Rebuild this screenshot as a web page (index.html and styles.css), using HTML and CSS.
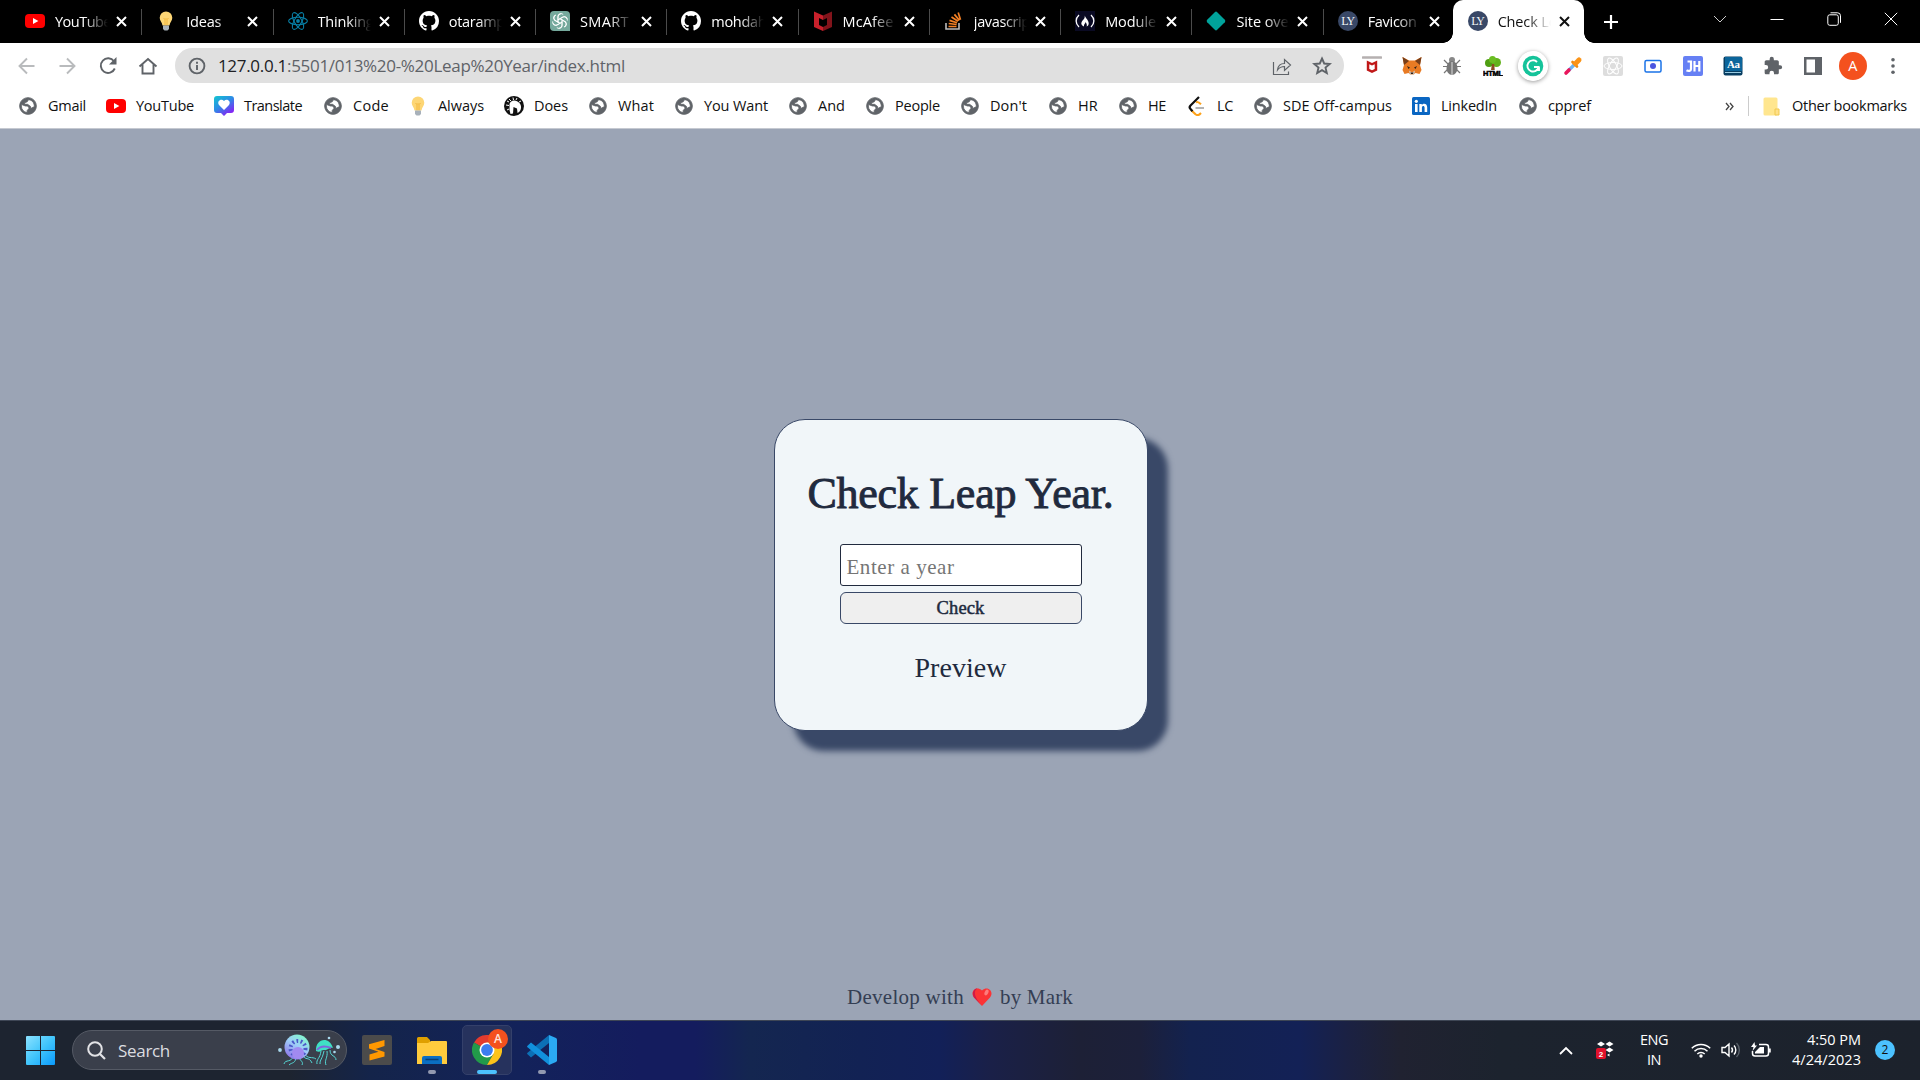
FILE: index.html
```html
<!DOCTYPE html>
<html lang="en">
<head>
<meta charset="utf-8">
<title>Check Leap Year</title>
<link rel="stylesheet" href="styles.css">
</head>
<body>
<svg class="defs" aria-hidden="true">
  <symbol id="youtube" viewBox="0 0 20 20"><rect y="3" width="20" height="14" rx="4" fill="#f00"/><path d="M8 7l5.4 3L8 13z" fill="#fff"/></symbol>
  <symbol id="bulb" viewBox="0 0 20 20"><path d="M10 .5a6.3 6.3 0 0 0-6.3 6.3c0 3 2.3 4.200 2.800 7.700h7c.5-3.500 2.800-4.700 2.800-7.700A6.300 6.300 0 0 0 10 .5z" fill="#fdd675"/><path d="M7.500 7l1.500 1.500 1-1 1 1L12.500 7M9 8.500v6M11 8.500v6" stroke="#f2b63c" fill="none"/><path d="M7 14.500h6v3.500l-1.500 1.500h-3L7 18z" fill="#a8b1ba"/></symbol>
  <symbol id="react" viewBox="0 0 20 20"><g fill="none" stroke="#087ea4" stroke-width="1.100"><ellipse cx="10" cy="10" rx="9.400" ry="3.700"/><ellipse cx="10" cy="10" rx="9.400" ry="3.700" transform="rotate(60 10 10)"/><ellipse cx="10" cy="10" rx="9.400" ry="3.700" transform="rotate(120 10 10)"/></g><circle cx="10" cy="10" r="1.900" fill="#087ea4"/></symbol>
  <symbol id="github" viewBox="0 0 16 16"><path fill="#fff" d="M8 0C3.58 0 0 3.58 0 8c0 3.54 2.29 6.530 5.470 7.590.4.070.550-.170.550-.380 0-.190-.010-.820-.010-1.490-2.010.370-2.530-.490-2.690-.940-.090-.230-.480-.940-.820-1.130-.280-.150-.680-.520-.010-.530.630-.010 1.080.580 1.230.820.720 1.210 1.870.870 2.330.660.070-.520.280-.870.510-1.070-1.780-.200-3.640-.890-3.640-3.950 0-.870.310-1.590.820-2.150-.080-.200-.360-1.020.080-2.120 0 0 .670-.210 2.200.820.640-.180 1.320-.270 2-.270s1.360.090 2 .270c1.530-1.040 2.200-.820 2.200-.820.440 1.100.160 1.920.080 2.120.510.560.820 1.270.820 2.150 0 3.070-1.870 3.750-3.650 3.950.290.250.540.730.540 1.480 0 1.070-.010 1.930-.010 2.200 0 .210.150.460.550.380A8.010 8.010 0 0 0 16 8c0-4.420-3.580-8-8-8z"/></symbol>
  <symbol id="openai" viewBox="0 0 20 20"><path d="M4 0h12a4 4 0 0 1 4 4v16H4a4 4 0 0 1-4-4V4a4 4 0 0 1 4-4z" fill="#75a99c"/><g fill="none" stroke="#fff" stroke-width=".9"><g id="petal"><path d="M8 11.200V5.500a3 3 0 0 1 5.200-2M8 8.800l4.500-2.600a3 3 0 0 1 4.400 1.600"/></g><use href="#petal" transform="rotate(60 10 10)"/><use href="#petal" transform="rotate(120 10 10)"/><use href="#petal" transform="rotate(180 10 10)"/><use href="#petal" transform="rotate(240 10 10)"/><use href="#petal" transform="rotate(300 10 10)"/></g></symbol>
  <symbol id="mcafee" viewBox="0 0 20 20"><path d="M1 .5l9 4v4.500L6 7v7l4 2v4l-9-4z" fill="#c8202b"/><path d="M19 .5l-9 4V9l4-2v7l-4 2v4l9-4z" fill="#82141b"/></symbol>
  <symbol id="stack" viewBox="0 0 20 20"><path d="M2 12v6h13v-6" fill="none" stroke="#bcbbbb" stroke-width="1.600"/><g stroke="#f48024" stroke-width="1.700"><path d="M4.500 15.500h8M4.700 12.500l7.900 1M5.500 9.400l7.500 2.400M7.500 6l6.500 4.200M10.400 3.400l5 6M14.200 1.600l2.300 7.200"/></g></symbol>
  <symbol id="fcc" viewBox="0 0 20 20"><path fill="#0a0a23" d="M0 0h20v20H0z"/><path d="M4 4C.2 7.500.2 12.500 4 16M16 4c3.800 3.500 3.800 8.500 0 12" stroke="#fff" stroke-width="1.300" fill="none"/><path d="M9.700 4.500c1 3 4 4.500 4 8 0 1.500-1 2.500-2 3 .6-2-.5-3-1-4.500-.2 1.400-2.200 2.300-1.700 4.500-4.500-2-2.300-5.200-.5-7 .9-1 1.500-2.400 1.200-4z" fill="#fff"/></symbol>
  <symbol id="diamond" viewBox="0 0 20 20"><path d="M8.800 1.200a1.700 1.700 0 0 1 2.400 0l7.600 7.600a1.700 1.700 0 0 1 0 2.400l-7.600 7.600a1.700 1.700 0 0 1-2.400 0l-7.600-7.600a1.700 1.700 0 0 1 0-2.400z" fill="#00a39b"/></symbol>
  <symbol id="globe" viewBox="0 0 24 24"><path fill="#5f6368" stroke="#5f6368" stroke-width="1" d="M12 2C6.480 2 2 6.480 2 12s4.480 10 10 10 10-4.480 10-10S17.520 2 12 2zm-1 17.930c-3.950-.490-7-3.850-7-7.930 0-.620.080-1.210.210-1.790L9 12h2.500l2 2.500-2.500 3v2.430zM19.500 13l-4.500 2v-2.500l-3.500-2.500H8V8l3-1 1.500-2.500c4 0 7.500 3.500 7 8.500z"/></symbol>
  <symbol id="heartchat" viewBox="0 0 20 20"><defs><linearGradient id="hg" x2=".7" y2="1"><stop stop-color="#12c6d0"/><stop offset=".5" stop-color="#2d8be6"/><stop offset="1" stop-color="#8b1cf5"/></linearGradient></defs><path d="M3 0h14a3 3 0 0 1 3 3v11a3 3 0 0 1-3 3h-4l-3 3-3-3H3a3 3 0 0 1-3-3V3a3 3 0 0 1 3-3z" fill="url(#hg)"/><path d="M10 14L5 9C2.500 5.500 7 2 10 5c3-3 7.500.5 5 4z" fill="#fff"/></symbol>
  <symbol id="zebra" viewBox="0 0 20 20"><circle cx="10" cy="10" r="10" fill="#111"/><path d="M5.500 8c1-3 4-4.500 8-2.500 3 1.500 4.500 5 3 8.500-.7 1.500-2 2.500-3 3l-.5-4.500-3.500-1.500-.5 6.500-2.500.5-1-4z" fill="#fff"/><path d="M3 5l2 1M2 9l3 .5M3 14l2-1M5 3l2 2M9 1.500l.5 2.500M13 2l-1 2M17 5l-2 1" stroke="#fff"/></symbol>
  <symbol id="leetcode" viewBox="0 0 20 20"><path d="M14 17l-1.500 1.300c-1 .9-3 .9-4 0L4 14" fill="none" stroke="#fda21a" stroke-width="2.200"/><path d="M9 6.500c1.500-1.200 2.500-.7 5 1.800" fill="none" stroke="#fda21a" stroke-width="2"/><path d="M12 1L3.500 9.500c-1 1-1 2.500 0 3.500l2 2.300" fill="none" stroke="#111" stroke-width="2.200"/><path d="M8.500 12H17" stroke="#b3b3b3" stroke-width="2"/></symbol>
  <symbol id="linkedin" viewBox="0 0 20 20"><rect x="1" y="1" width="18" height="18" rx="1.500" fill="#0a66c2"/><circle cx="5.300" cy="5.300" r="1.600" fill="#fff"/><path d="M4 8h2.600v8H4zM8.300 8h2.500v1.200c1.600-2.400 5.400-1.500 5.400 2V16h-2.600v-4.300c0-2.400-2.700-2.200-2.700 0V16H8.300z" fill="#fff"/></symbol>
</svg>

<header class="browser">
  <div class="tabstrip">
    <nav class="tabs" id="tabs"></nav>
    <svg class="newtab" viewBox="0 0 16 16"><path d="M8 1v14M1 8h14" stroke="#fff" stroke-width="2.200"/></svg>
    <div class="winctl">
      <svg viewBox="0 0 14 14"><path d="M1 4l6 6 6-6" stroke="#ccc" fill="none"/></svg>
      <svg viewBox="0 0 14 14"><path d="M.5 7.500h13" stroke="#fff" fill="none"/></svg>
      <svg viewBox="0 0 14 14"><rect x=".8" y="2.800" width="10.500" height="10.500" rx="2" stroke="#fff" fill="none"/><path d="M3.500.8h7a3 3 0 0 1 3 3v7" stroke="#fff" fill="none"/></svg>
      <svg viewBox="0 0 14 14"><path d="M.8.8l12.400 12.400M13.200.8L.8 13.200" stroke="#fff" fill="none"/></svg>
    </div>
  </div>

  <div class="toolbar">
    <div class="navbtns">
      <svg viewBox="0 0 20 20"><path d="M17.500 10H3M10 2.500L2.500 10l7.500 7.500" class="ln pale"/></svg>
      <svg viewBox="0 0 20 20"><path d="M2.500 10H17M10 2.500l7.500 7.500-7.500 7.500" class="ln pale"/></svg>
      <svg viewBox="0 0 20 20"><path d="M16.800 12.500a7.300 7.300 0 1 1-.8-7.200" class="ln"/><path d="M18.500 1v7.500H11z" fill="#5f6368"/></svg>
      <svg viewBox="0 0 20 20"><path d="M1.500 10.500L10 3l8.500 7.500M4.500 8.500v9h11v-9" class="ln"/></svg>
    </div>
    <div class="omnibox">
      <svg class="i18" viewBox="0 0 18 18"><circle cx="9" cy="9" r="7.400" class="ln"/><path d="M9 8v5M9 4.800v1.900" class="ln"/></svg>
      <span class="url" data-w="407"><b>127.0.0.1</b>:5501/013%20-%20Leap%20Year/index.html</span>
      <svg class="i20 share" viewBox="0 0 20 20"><path d="M1.500 6v12.500h15v-3M5.500 14c.5-4.500 3-6.500 7-6.500v-4l6 5.500-6 5.500v-4c-3 0-5 .8-7 3.500z" fill="none" stroke="#5f6368" stroke-width="1.200"/></svg>
      <svg class="i20" viewBox="0 0 20 20"><path d="M10 2.500l2.200 5 5.500.5-4.200 3.600 1.300 5.400-4.800-2.900L5.200 17l1.300-5.400L2.300 8l5.500-.5z" class="ln"/></svg>
    </div>
    <div class="exts">
      <svg viewBox="0 0 20 20"><path d="M1 1.500h18" stroke="#b5b0b0" stroke-width="2.600" stroke-linecap="round"/><path d="M4.800 4.500l5.200 2.500 5.200-2.500v10L10 17l-5.200-2.500z" fill="#c01818"/><path d="M7.300 8.200L10 9.500l2.700-1.300v4.700L10 14.300l-2.700-1.400z" fill="#fff"/></svg>
      <svg viewBox="0 0 20 20"><path d="M.5 1L7 4.500h6L19.500 1 18 9l1.500 5-2 4-4-1-2 1.500h-3L6.500 17l-4 1-2-4L2 9z" fill="#e87b24"/><path d="M.5 1L7 5 2 9zM19.500 1L13 5l5 4z" fill="#763e1a"/><path d="M7 14.500l3 2 3-2-.8 4H7.800z" fill="#d8c8b8"/><path d="M5 10l3 1.500L6.500 13zM15 10l-3 1.500 1.500 1.500zM8.500 16.500h3L11 18H9z" fill="#30231d"/></svg>
      <svg viewBox="0 0 20 20"><path d="M2 4l4 4M18 4l-4 4M1 10.500h18M2 17l4-4M18 17l-4-4" stroke="#777" stroke-width="1.200"/><circle cx="10" cy="4" r="3" fill="#888"/><ellipse cx="10" cy="12" rx="5.500" ry="7" fill="#777"/><path d="M10 6v13" stroke="#aaa" stroke-width="2"/></svg>
      <svg viewBox="0 0 20 20"><circle cx="6" cy="7" r="4" fill="#4f9e13"/><circle cx="13.500" cy="6.500" r="4.500" fill="#62b21b"/><circle cx="9.500" cy="3.500" r="3.500" fill="#6abd22"/><path d="M9 8h2.200l.5 6H8z" fill="#8a4b20"/><text x="0" y="19.500" class="htm" textLength="20">HTML</text></svg>
      <svg class="gram" viewBox="0 0 30 30"><circle cx="15" cy="15" r="15" fill="#fff"/><circle cx="15" cy="15" r="10.300" fill="#15c39a"/><path d="M19 11a5.600 5.600 0 1 0 1.500 5H16M18 19h3v-3" fill="none" stroke="#fff" stroke-width="1.900"/></svg>
      <svg viewBox="0 0 20 20"><path d="M5 15l6-6" stroke="#6db4f2" stroke-width="3.200"/><path d="M3 17l3-3" stroke="#e9165c" stroke-width="3.600" stroke-linecap="round"/><path d="M9.500 6l4.500 4.500" stroke="#f08a10" stroke-width="2.600" stroke-linecap="round"/><path d="M12.500 7.500L16 4" stroke="#fb9418" stroke-width="5" stroke-linecap="round"/></svg>
      <svg viewBox="0 0 20 20"><rect width="20" height="20" rx="2" fill="#ddd"/><g stroke="#fff" fill="none"><ellipse cx="10" cy="10" rx="9" ry="3.500"/><ellipse cx="10" cy="10" rx="9" ry="3.500" transform="rotate(60 10 10)"/><ellipse cx="10" cy="10" rx="9" ry="3.500" transform="rotate(120 10 10)"/></g></svg>
      <svg viewBox="0 0 20 20"><rect x="2" y="4.500" width="16" height="11.500" rx="1.500" fill="#fff" stroke="#1a73e8" stroke-width="1.500"/><circle cx="10" cy="10" r="3" fill="#4b55e0"/></svg>
      <svg viewBox="0 0 20 20"><rect width="20" height="20" rx="2" fill="#6680f4"/><path d="M4.500 5.500H8v7.500c0 2-2.500 2.500-4.500 1.300M11.500 5v10.500M16.300 5v10.500M11.500 10h5" fill="none" stroke="#fff" stroke-width="2.200"/></svg>
      <svg viewBox="0 0 20 20"><rect x=".5" y=".5" width="19" height="19" rx="2" fill="#093f63"/><rect x="2" y="1" width="17" height="14" fill="#0b659b"/><path d="M2 16.500h16" stroke="#9acce2"/><text x="4" y="12" class="aa" textLength="13">Aa</text></svg>
      <svg viewBox="0 0 24 24"><path fill="#5f6368" d="M20.500 11H19V7c0-1.100-.9-2-2-2h-4V3.500a2.500 2.500 0 0 0-5 0V5H4c-1.100 0-2 .9-2 2v3.800h1.500a2.700 2.700 0 0 1 0 5.400H2V20c0 1.100.9 2 2 2h3.800v-1.500a2.700 2.700 0 0 1 5.400 0V22H17c1.100 0 2-.9 2-2v-4h1.500a2.500 2.500 0 0 0 0-5z"/></svg>
      <svg viewBox="0 0 20 20"><path d="M1 1h18v18H1z" fill="#5f6368"/><path d="M3.500 3.500H12v13H3.500z" fill="#fff"/></svg>
      <span class="avatar">A</span>
      <svg viewBox="0 0 20 20"><g fill="#5f6368"><circle cx="10" cy="3.700" r="1.800"/><circle cx="10" cy="10" r="1.800"/><circle cx="10" cy="16.300" r="1.800"/></g></svg>
    </div>
  </div>

  <div class="bookmarks">
    <nav class="bmlist" id="bookmarks"></nav>
    <svg class="more" viewBox="0 0 9 9"><path d="M1 1l3 3.500L1 8M5 1l3 3.500L5 8" fill="none" stroke="#444" stroke-width="1.300"/></svg>
    <i class="bmsep"></i>
    <svg class="folder" viewBox="0 0 17 19"><rect x=".5" y=".5" width="14" height="18" rx="1.500" fill="#ffe68f"/><path d="M12 12h4v6h-4z" fill="#ffe08a" stroke="#f0c94e"/></svg>
    <span data-w="115">Other bookmarks</span>
  </div>
</header>

<main class="page">
  <section class="card">
    <h1><span data-w="306">Check Leap Year.</span></h1>
    <div class="field"><span data-w="108">Enter a year</span></div>
    <button class="check"><span data-w="48">Check</span></button>
    <p class="preview"><span data-w="92">Preview</span></p>
  </section>
  <footer class="credit">
    <span data-w="117">Develop with</span>
    <svg viewBox="0 0 20 20"><path d="M10 19L2 10.500C-2.500 5 4-2 10 3.500 16-2 22.500 5 18 10.500z" fill="#fb3335"/><path d="M10 19L2 10.500C-.5 7 1.500 1.500 5.500 1.300 0 5 4 12 10 19z" fill="#cf1a48"/><ellipse cx="14.500" cy="5.500" rx="1.800" ry="3" transform="rotate(25 14.500 5.500)" fill="#fd7c7c"/></svg>
    <span data-w="73">by Mark</span>
  </footer>
</main>

<footer class="taskbar">
  <svg class="win" viewBox="0 0 29 29"><defs><linearGradient id="wg" x2="1" y2="1"><stop stop-color="#8ce2ff"/><stop offset=".5" stop-color="#41c5fb"/><stop offset="1" stop-color="#0a9afc"/></linearGradient></defs><path fill="url(#wg)" d="M0 1a1 1 0 0 1 1-1h13v14H0zM15 0h13a1 1 0 0 1 1 1v13H15zM0 15h14v14H1a1 1 0 0 1-1-1zM15 15h14v13a1 1 0 0 1-1 1H15z"/></svg>
  <div class="search">
    <svg class="mag" viewBox="0 0 19 19"><circle cx="8" cy="8" r="6.800" fill="none" stroke="#e2e3e6" stroke-width="2"/><path d="M13 13l5 5" stroke="#e2e3e6" stroke-width="2.200"/></svg>
    <span data-w="52">Search</span>
    <svg class="jelly" viewBox="0 0 64 32"><defs><linearGradient id="jg" x1=".8" x2=".2" y2="1"><stop stop-color="#7dfbc8"/><stop offset=".45" stop-color="#9fcdf8"/><stop offset="1" stop-color="#8d6ee8"/></linearGradient></defs><g fill="none" stroke="#55d8d6" stroke-width="1"><path d="M15 22c-1 7-8 3-9 8M18 22c0 8-4 6-7 9M21 22c0 5 5 5 3 9M25 21c2 6 6 1 9 8M26 19c4 7 8 3 12 6M43 17c-1 8-5 8-4 13M46 17c-2 9-4 8-4 13M49 17c1 7-3 9-1 14M52 16c0 7 6 5 6 10"/></g><circle cx="19" cy="13" r="12.500" fill="url(#jg)"/><circle cx="20" cy="14.500" r="7.500" fill="none" stroke="#4c57c8" stroke-width="4" stroke-dasharray="1.700 2.500"/><circle cx="20" cy="19" r="6" fill="#a18af0"/><path d="M38 17c-1-12 13-16 17-3-4-1-6 3-9 2-3 0-4 3-8 1z" fill="#3fe0c4"/><path d="M39 16c4-5 9-4 14-2" stroke="#7c66dd" stroke-width="2" fill="none"/><g fill="#a9d9ee"><circle cx="2" cy="16" r="1.900"/><circle cx="51" cy="4" r="1.300"/><circle cx="60" cy="13" r="2"/><circle cx="56.500" cy="18" r="1.300"/></g></svg>
  </div>
  <div class="apps">
    <div class="app"><svg viewBox="0 0 30 30"><rect width="30" height="30" rx="2" fill="#4b4b4b"/><path d="M22.500 5v6l-9 3 9 3v4.500l-15 4v-6l9-2.800-9.500-3.200V9.300z" fill="#ff9800"/></svg></div>
    <div class="app run"><svg viewBox="0 0 30 30"><path d="M0 3.500A1.500 1.500 0 0 1 1.500 2H10l3 3v5H0z" fill="#dfa000"/><path d="M0 8h11l3-2h15a1 1 0 0 1 1 1v22H0z" fill="#ffcb3d"/><path d="M5 29v-6a2 2 0 0 1 2-2h16a2 2 0 0 1 2 2v6z" fill="#0b6fc2"/><path d="M8.500 24.500h13" stroke="#073f75" stroke-width="1.500"/></svg></div>
    <div class="app run active"><svg viewBox="0 0 30 30"><path d="M15 15L2 7.500A15 15 0 0 1 28 7.500H15z" fill="#e33b2e"/><path d="M15 15L2 7.500A15 15 0 0 0 15 30l6.500-11.200z" fill="#229a4a"/><path d="M15 15V7.500h13A15 15 0 0 1 15 30l6.500-11.200z" fill="#fcc31a"/><circle cx="15" cy="15" r="7.500" fill="#fff"/><circle cx="15" cy="15" r="5.900" fill="#3b7df0"/></svg><span class="badge">A</span></div>
    <div class="app run"><svg viewBox="0 0 30 30"><path d="M22 8L4 22.500l-3.500-3.200a1 1 0 0 1 0-1.500L22 0z" fill="#0c6fb5"/><path d="M22 22L4 7.500.5 10.700a1 1 0 0 0 0 1.500L22 30z" fill="#1190dc"/><path d="M22 0l7 3a2 2 0 0 1 1 1.700v20.600a2 2 0 0 1-1 1.700l-7 3z" fill="#2baaf3"/></svg></div>
  </div>
  <div class="tray">
    <svg class="chev" viewBox="0 0 14 9"><path d="M1 8l6-6 6 6" fill="none" stroke="#fff" stroke-width="1.800"/></svg>
    <svg class="drop" viewBox="0 0 18 18"><g fill="#fff"><path d="M1 3l4-2.500L9 3 5 5.500zM9.500 3l4-2.500 4 2.500-4 2.500zM9.500 9l4-2.500 4 2.500-4 2.500zM11 14l2.500-1.500v3z"/></g><rect y="7" width="10" height="11" rx="2" fill="#e0112b"/><text x="5" y="16" text-anchor="middle" class="dn">2</text></svg>
    <div class="lang"><span data-w="28">ENG</span><span data-w="14">IN</span></div>
    <svg class="wifi" viewBox="0 0 20 16"><g fill="none" stroke="#fff" stroke-width="1.500"><path d="M.8 6.200a13 13 0 0 1 18.400 0M3.500 9.200a9.200 9.200 0 0 1 13 0M6.300 12a5.300 5.300 0 0 1 7.400 0"/></g><circle cx="10" cy="14" r="1.700" fill="#fff"/></svg>
    <svg class="snd" viewBox="0 0 20 16"><g fill="none" stroke="#fff" stroke-width="1.400"><path d="M1 5.500h3L8 2v12l-4-3.500H1zM10.500 5.500a4 4 0 0 1 0 5M13 3.500a6.500 6.500 0 0 1 0 9"/><path d="M15.500 1a10 10 0 0 1 0 14" stroke="#586069"/></g></svg>
    <svg class="bat" viewBox="0 0 20 16"><path d="M8 2.500h7a2.500 2.500 0 0 1 2.500 2.500v6.500A2.500 2.500 0 0 1 15 14H4a2.500 2.500 0 0 1-2.500-2.500V9M19 6.500v4" fill="none" stroke="#fff" stroke-width="1.500"/><path d="M9 5h4v6.500H4V10zM3.500 0L0 5h2.500L1.500 9 6 3.500H4z" fill="#fff"/></svg>
    <div class="clock"><span data-w="54">4:50 PM</span><span data-w="69">4/24/2023</span></div>
    <span class="notif">2</span>
  </div>
</footer>
<script src="app.js"></script>
</body>
</html>
```
FILE: styles.css
```css
* { box-sizing: border-box; }
body { margin: 0; width: 1920px; height: 1080px; overflow: hidden; display: flex; flex-direction: column; font-family: "Open Sans", "Noto Sans", sans-serif; font-size: 14.5px; color: #111; }
svg { display: block; flex: none; }
.defs { position: absolute; width: 0; height: 0; }
[data-w] { display: inline-block; white-space: nowrap; }
.ln { fill: none; stroke: #5f6368; stroke-width: 1.9; }
.pale { stroke: #b9bbbd; }
.i18 { width: 18px; height: 18px; }
.i20 { width: 20px; height: 20px; }
.ly { width: 20px; height: 20px; border-radius: 50%; background: #394867; color: #f1f6f9; font: 12px/20px "Liberation Serif", serif; text-align: center; letter-spacing: -1px; flex: none; }
.htm { font: 900 7.5px "Liberation Sans", sans-serif; stroke: #000; stroke-width: .5; }
.aa { font: bold 11px "Liberation Serif", serif; fill: #fff; }

.browser { height: 129px; background: #fff; border-bottom: 1px solid #c5c9d1; flex: none; }
.tabstrip { height: 43px; background: #000; display: flex; align-items: center; padding-left: 10px; }
.tabs { display: flex; height: 43px; }
.tab { width: 131.27px; height: 43px; padding: 0 13px 1px 15px; display: flex; align-items: center; color: #fff; position: relative; }
.tab > svg:first-child { width: 20px; height: 20px; }
.tab .label { width: 53px; margin-left: 10px; overflow: hidden; white-space: nowrap; -webkit-mask-image: linear-gradient(90deg, #000 55%, transparent); mask-image: linear-gradient(90deg, #000 55%, transparent); }
.tab .close { width: 11px; height: 11px; margin-left: 8px; }
.tab::after { content: ""; position: absolute; right: -1px; top: 9px; width: 1px; height: 26px; background: #4b4b4b; }
.tab.active { background: #fff; color: #111; border-radius: 10px 10px 0 0; margin-left: -1.3px; }
.tab.active::before, .tab.active::after { content: ""; position: absolute; background: none; width: 10px; height: 10px; top: auto; bottom: 0; }
.tab.active::before { left: -10px; background: radial-gradient(circle at 0 0, #000 9.5px, #fff 10px); }
.tab.active::after { right: -10px; background: radial-gradient(circle at 100% 0, #000 9.5px, #fff 10px); }
.tab.before-active::after { display: none; }
.newtab { width: 16px; height: 16px; margin-left: 19px; }
.winctl { margin: -5px 22px 0 auto; display: flex; gap: 43px; }
.winctl svg { width: 14px; height: 14px; }

.toolbar { height: 45px; display: flex; align-items: center; padding: 0 7px 0 17px; }
.navbtns { display: flex; gap: 20.3px; width: 158px; }
.navbtns svg { width: 20px; height: 20px; }
.omnibox { width: 1170px; height: 35px; border-radius: 18px; background: #e0e0e0; display: flex; align-items: center; padding: 0 12px 0 13px; }
.url { margin-left: 12px; font-size: 17px; color: #5f6368; line-height: 35px; }
.url b { font-weight: 400; color: #202124; }
.share { margin: 0 20px 0 auto; }
.exts { display: grid; grid-template-columns: repeat(14, 40.05px); place-items: center; margin-left: 8px; }
.exts svg { width: 20px; height: 20px; }
.exts .gram { width: 30px; height: 30px; border-radius: 50%; box-shadow: 0 1px 4px rgba(0,0,0,.4); }
.avatar { width: 28px; height: 28px; border-radius: 50%; background: #f4511e; color: #fff; text-align: center; line-height: 28px; }

.bookmarks { height: 40px; padding: 0 13px 4px 18px; display: flex; align-items: center; line-height: 20px; }
.bmlist { display: flex; }
.bm { display: flex; align-items: center; gap: 10px; }
.bm svg { width: 20px; height: 20px; }
.more { width: 9px; height: 9px; margin-left: auto; }
.bmsep { width: 1px; height: 20px; background: #ccc; margin: 0 14px; }
.folder { width: 17px; height: 19px; margin-right: 12px; }

.page { height: 891px; background: #9ba4b5; display: grid; grid-template-rows: 290px 312px 1fr; justify-items: center; font-family: "Liberation Serif", serif; color: #212a3e; flex: none; }
.card { grid-row: 2; width: 374px; height: 312px; margin-left: 1px; border: 1px solid #394867; border-radius: 31px; background: #f1f6f9; box-shadow: 19.5px 19.5px 6px #394867; display: flex; flex-direction: column; align-items: center; }
h1 { margin: 49px 0 0; height: 50px; line-height: 50px; font-size: 44px; font-weight: 400; -webkit-text-stroke: .9px #212a3e; }
.field { width: 242px; height: 42px; margin-top: 25px; border: 1px solid #212a3e; border-radius: 3px; background: #fff; padding-left: 6px; color: #757575; font-size: 21px; line-height: 44px; }
.check { width: 242px; height: 32px; margin-top: 6px; padding: 1px 0 0; border: 1px solid #394867; border-radius: 6px; background: #efefef; color: #212a3e; font: 18.5px/29px "Liberation Serif", serif; -webkit-text-stroke: .5px #212a3e; }
.preview { margin: 27px 0 0; font-size: 28px; line-height: 34px; }
.credit { grid-row: 3; align-self: end; display: flex; align-items: center; gap: 8px; height: 46px; font-size: 21px; color: #343e53; }
.credit svg { width: 20px; height: 20px; }

.taskbar { height: 60px; flex: none; display: flex; align-items: center; padding: 0 25px 1px 26px; border-top: 1px solid #3e4655; color: #fff; background: linear-gradient(90deg, #1d2430 0, #1d2430 290px, #14244a 370px, #13225a 520px, #141c5e 640px, #141c5e 695px, #142650 750px, #122254 860px, #122058 940px, #1a2048 990px, #1d2036 1080px, #1c203a 1140px, #13224f 1190px, #132156 1300px, #1b2142 1350px, #202231 1400px, #1c232e 1500px, #1c222c 100%); }
.win { width: 29px; height: 29px; }
.search { width: 275px; height: 40px; margin-left: 17px; border-radius: 20px; border: 1px solid #555a65; background: #3a3f4b; display: flex; align-items: center; padding: 0 4px 0 14px; font-size: 17px; color: #dcdde0; }
.mag { width: 19px; height: 19px; margin-right: 12px; }
.jelly { width: 64px; height: 32px; margin-left: auto; }
.apps { display: flex; gap: 5px; margin-left: 5px; }
.app { width: 50px; height: 50px; border-radius: 5px; position: relative; display: grid; place-items: center; }
.app svg { width: 30px; height: 30px; }
.active.app { background: #26325d; border: 1px solid #34406a; }
.run::after { content: ""; position: absolute; left: 21px; bottom: 1px; width: 8px; height: 4px; border-radius: 2px; background: #9299b0; }
.active.run::after { left: 14px; bottom: 0; width: 20px; background: #4cc2ff; }
.badge { position: absolute; left: 25px; top: 3px; width: 20px; height: 20px; border-radius: 50%; background: #f4511e; font-size: 12px; font-weight: 600; text-align: center; line-height: 20px; color: #ffe3da; }
.tray { margin-left: auto; display: flex; align-items: center; font-size: 14.5px; line-height: 20px; }
.chev { width: 14px; height: 9px; margin-right: 1px; }
.drop { width: 18px; height: 18px; margin-left: 22px; }
.dn { font: bold 8px "Liberation Sans", sans-serif; fill: #fff; }
.lang { width: 40px; margin-left: 20px; display: flex; flex-direction: column; align-items: center; }
.wifi, .snd, .bat { width: 20px; height: 16px; margin-left: 17px; }
.snd, .bat { margin-left: 10px; }
.clock { width: 80px; margin-left: 10px; display: flex; flex-direction: column; align-items: flex-end; }
.notif { width: 20px; height: 20px; margin-left: 14px; border-radius: 50%; background: #4cc2ff; color: #111; font-size: 12px; line-height: 19px; text-align: center; }
```
FILE: app.js
```js
const icon = (id) => id === "ly" ? `<span class="ly">LY</span>` : `<svg><use href="#${id}"/></svg>`;

// [icon, title, text width]
const tabs = [
  ["youtube", "YouTube", 56], ["bulb", "Ideas", 35], ["react", "Thinking", 56], ["github", "otaramp", 56],
  ["openai", "SMART ", 49], ["github", "mohdah", 55], ["mcafee", "McAfee", 51], ["stack", "javascrip", 56],
  ["fcc", "Module", 51], ["diamond", "Site over", 58], ["ly", "Favicon", 49], ["ly", "Check Le", 59],
];
document.getElementById("tabs").innerHTML = tabs.map(([ic, t, w], i) => {
  const cls = i === 11 ? " active" : i === 10 ? " before-active" : "";
  return `<div class="tab${cls}">${icon(ic)}<span class="label"><span data-w="${w}">${t}</span></span>` +
    `<svg class="close" viewBox="0 0 11 11"><path d="M1 1l9 9M10 1l-9 9" stroke="currentColor" stroke-width="2"/></svg></div>`;
}).join("");

// [icon, title, item width, text width]
const bookmarks = [
  ["globe", "Gmail", 88, 38], ["youtube", "YouTube", 108, 58], ["heartchat", "Translate", 109, 58],
  ["globe", "Code", 85, 36], ["bulb", "Always", 96, 46], ["zebra", "Does", 84, 34],
  ["globe", "What", 86, 36], ["globe", "You Want", 114, 64], ["globe", "And", 77, 27],
  ["globe", "People", 95, 45], ["globe", "Don't", 88, 37], ["globe", "HR", 70, 20],
  ["globe", "HE", 69, 18], ["leetcode", "LC", 66, 16], ["globe", "SDE Off-campus", 158, 109],
  ["linkedin", "LinkedIn", 107, 56], ["globe", "cppref", 80, 43],
];
document.getElementById("bookmarks").innerHTML = bookmarks.map(([ic, t, w, tw]) =>
  `<div class="bm" style="width:${w}px">${icon(ic)}<span data-w="${tw}">${t}</span></div>`).join("");

// Track each label so that it fills its given width.
document.querySelectorAll("[data-w]").forEach((el) => {
  const natural = el.getBoundingClientRect().width;
  el.style.letterSpacing = (el.dataset.w - natural) / el.textContent.length + "px";
});
```
